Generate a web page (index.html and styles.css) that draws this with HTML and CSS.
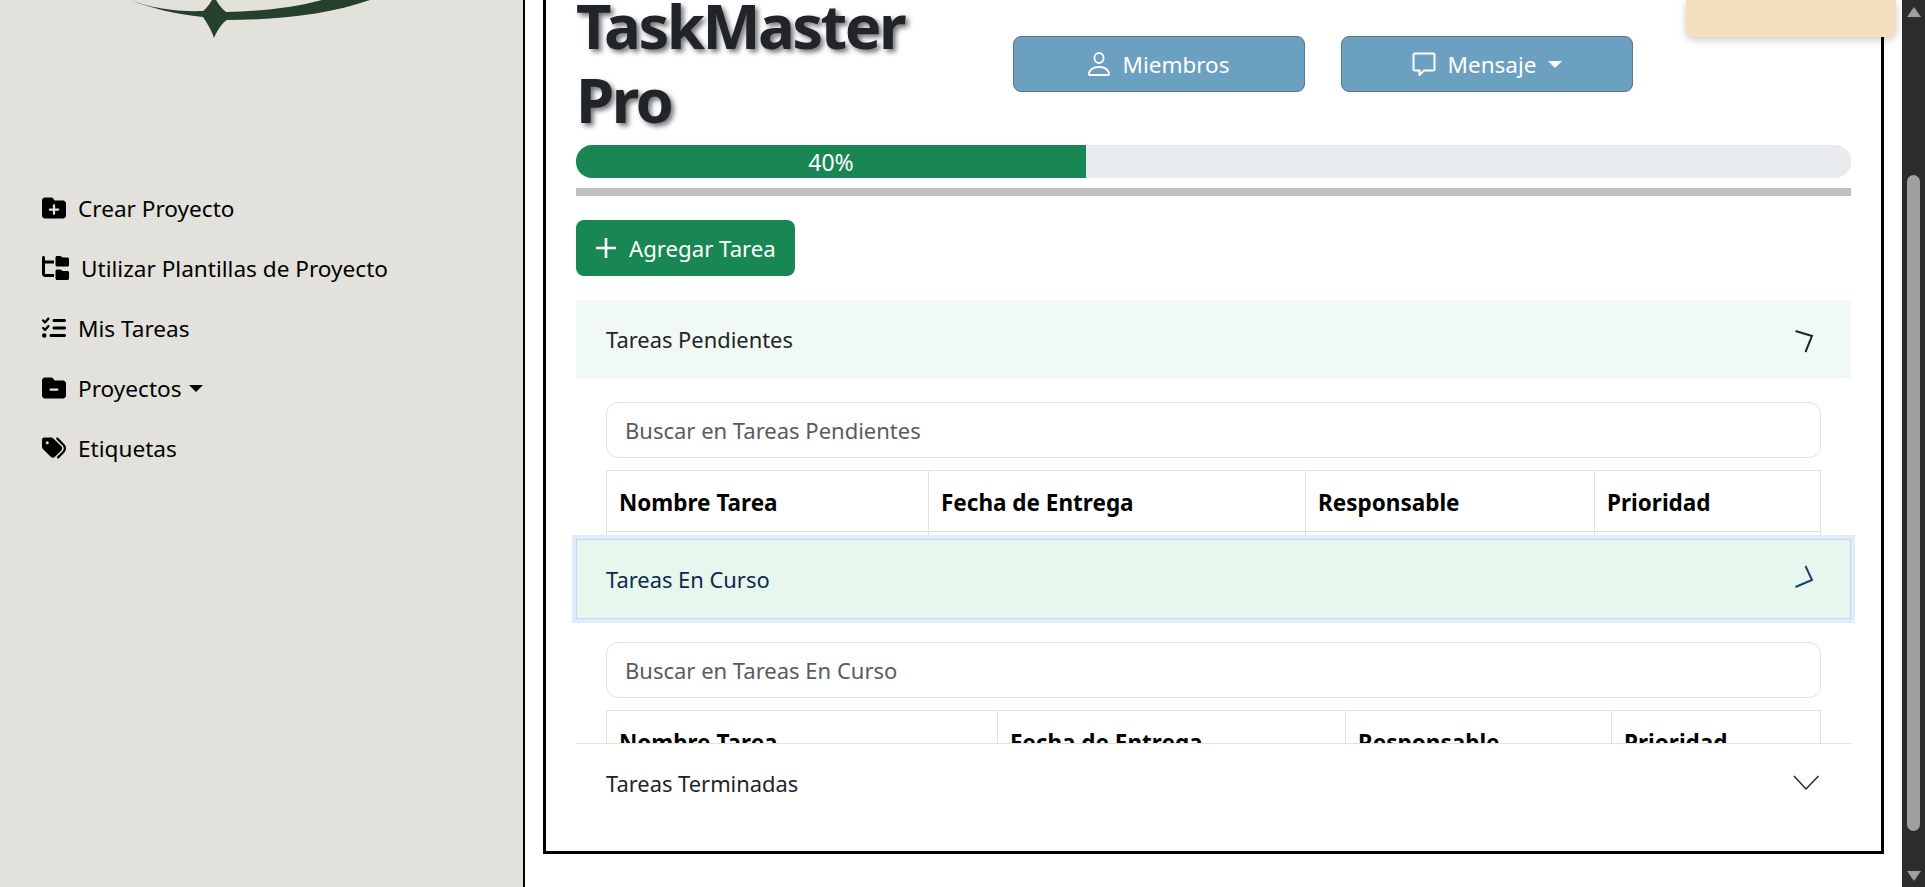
FILE: index.html
```html
<!doctype html>
<html lang="es">
    <head>
        <meta charset="UTF-8" />
        <meta name="viewport" content="width=device-width, initial-scale=1.0" />
        <title>TaskMaster Pro</title>
        <link rel="stylesheet" href="styles.css">
    </head>
    <body>
        <div class="page">
            <aside class="sidebar">
                <svg class="logo" viewBox="0 0 523 40" aria-hidden="true">
                    <path d="M130 0C150 8 178 12 203 11C207 8 210 4 214 -4C218 4 221 8 226 12C262 11 292 8 322 0H370C330 14 280 20 227 20C222 23 218 29 214 38C211 29 207 23 203 17C175 14 150 8 130 0Z" />
                </svg>
                <nav class="side-nav">
                    <a class="side-link" href="#">
                        <svg class="side-icon" viewBox="0 0 512 512"><path fill-rule="evenodd" d="M512 416c0 35.300-28.700 64-64 64H64c-35.300 0-64-28.700-64-64V96C0 60.700 28.700 32 64 32H192c20.100 0 39.100 9.500 51.200 25.600l19.200 25.600c6 8.100 15.500 12.800 25.600 12.800H448c35.300 0 64 28.700 64 64V416zM232 376c0 13.300 10.700 24 24 24s24-10.700 24-24V312h64c13.300 0 24-10.700 24-24s-10.700-24-24-24H280V200c0-13.300-10.700-24-24-24s-24 10.700-24 24v64H168c-13.300 0-24 10.700-24 24s10.700 24 24 24h64v64z"/></svg>
                        Crear Proyecto
                    </a>
                    <a class="side-link" href="#">
                        <svg class="side-icon side-icon-wide" viewBox="0 0 576 512"><path d="M64 32C64 14.300 49.700 0 32 0S0 14.300 0 32v96V384c0 35.300 28.700 64 64 64H256V384H64V160H256V96H64V32zM288 192c0 17.700 14.300 32 32 32H544c17.700 0 32-14.300 32-32V64c0-17.700-14.300-32-32-32H445.300c-8.500 0-16.600-3.400-22.600-9.400L409.400 9.400c-6-6-14.100-9.400-22.600-9.400H320c-17.700 0-32 14.300-32 32V192zm0 288c0 17.700 14.300 32 32 32H544c17.700 0 32-14.300 32-32V352c0-17.700-14.300-32-32-32H445.300c-8.500 0-16.600-3.400-22.600-9.400l-13.300-13.300c-6-6-14.100-9.400-22.600-9.400H320c-17.700 0-32 14.300-32 32V480z"/></svg>
                        Utilizar Plantillas de Proyecto
                    </a>
                    <a class="side-link" href="#">
                        <svg class="side-icon" viewBox="0 0 512 512"><path d="M152.100 38.200c9.900 8.900 10.700 24 1.800 33.900l-72 80c-4.400 4.900-10.600 7.800-17.200 7.900s-12.900-2.400-17.600-7L7 113C-2.300 103.600-2.300 88.400 7 79s24.600-9.400 33.900 0l22.100 22.100 55.100-61.200c8.900-9.900 24-10.700 33.900-1.800zm0 160c9.900 8.900 10.700 24 1.800 33.900l-72 80c-4.400 4.900-10.600 7.800-17.200 7.900s-12.900-2.400-17.600-7L7 273c-9.400-9.400-9.400-24.600 0-33.900s24.600-9.400 33.900 0l22.100 22.100 55.100-61.200c8.900-9.900 24-10.700 33.900-1.800zM224 96c0-17.700 14.300-32 32-32H480c17.700 0 32 14.300 32 32s-14.300 32-32 32H256c-17.700 0-32-14.300-32-32zm0 160c0-17.700 14.300-32 32-32H480c17.700 0 32 14.300 32 32s-14.300 32-32 32H256c-17.700 0-32-14.300-32-32zM160 416c0-17.700 14.300-32 32-32H480c17.700 0 32 14.300 32 32s-14.300 32-32 32H192c-17.700 0-32-14.300-32-32zM48 368a48 48 0 1 1 0 96 48 48 0 1 1 0-96z"/></svg>
                        Mis Tareas
                    </a>
                    <a class="side-link" href="#">
                        <svg class="side-icon" viewBox="0 0 512 512"><path fill-rule="evenodd" d="M448 480H64c-35.300 0-64-28.700-64-64V96C0 60.700 28.700 32 64 32H192c20.100 0 39.100 9.500 51.200 25.600l19.200 25.600c6 8.100 15.500 12.800 25.600 12.800H448c35.300 0 64 28.700 64 64V416c0 35.300-28.700 64-64 64zM184 264c-13.300 0-24 10.700-24 24s10.700 24 24 24H328c13.300 0 24-10.700 24-24s-10.700-24-24-24H184z"/></svg>
                        Proyectos<span class="caret caret-dark"></span>
                    </a>
                    <a class="side-link" href="#">
                        <svg class="side-icon" viewBox="0 0 512 512"><path fill-rule="evenodd" d="M345 39.100L472.800 168.400c52.400 53 52.400 138.200 0 191.200L360.800 472.900c-9.300 9.400-24.500 9.500-33.900 .2s-9.500-24.500-.2-33.900L438.600 325.900c33.900-34.300 33.900-89.400 0-123.700L310.900 72.900c-9.300-9.400-9.200-24.600 .2-33.900s24.600-9.200 33.900 .2zM0 229.500V80C0 53.500 21.500 32 48 32H197.500c17 0 33.300 6.700 45.300 18.700l168 168c25 25 25 65.500 0 90.500L277.300 442.700c-25 25-65.500 25-90.500 0l-168-168C6.700 262.700 0 246.500 0 229.500zM144 144a32 32 0 1 0 -64 0 32 32 0 1 0 64 0z"/></svg>
                        Etiquetas
                    </a>
                </nav>
            </aside>

            <main class="main">
                <section class="project-card">
                    <div class="project-head">
                        <h1 class="project-title">TaskMaster Pro</h1>
                        <button class="head-btn">
                            <svg class="person-icon" viewBox="2 2 12 12" preserveAspectRatio="none"><path d="M8 8a3 3 0 1 0 0-6 3 3 0 0 0 0 6m2-3a2 2 0 1 1-4 0 2 2 0 0 1 4 0m4 8c0 1-1 1-1 1H3s-1 0-1-1 1-4 6-4 6 3 6 4m-1-.004c-.001-.246-.154-.986-.832-1.664C11.516 10.680 10.289 10 8 10s-3.516.680-4.168 1.332c-.678.678-.830 1.418-.832 1.664z"/></svg>
                            Miembros
                        </button>
                        <button class="head-btn">
                            <svg class="btn-icon" viewBox="0 0 24 24"><path class="bubble" d="M3 1.500H21A1.500 1.500 0 0 1 22.500 3V17A1.500 1.500 0 0 1 21 18.500H12L7.500 23V18.500H3A1.500 1.500 0 0 1 1.500 17V3A1.500 1.500 0 0 1 3 1.500Z"/></svg>
                            Mensaje<span class="caret"></span>
                        </button>
                    </div>

                    <div class="progress">
                        <div class="progress-bar" style="width: 40%">40%</div>
                    </div>
                    <hr class="divider" />

                    <button class="add-btn">
                        <svg class="plus-icon" viewBox="0 0 20 20"><path d="M10 0V20M0 10H20"/></svg>
                        Agregar Tarea
                    </button>

                    <div class="accordion">
                        <div class="acc-item">
                            <div class="acc-header acc-header-open">
                                Tareas Pendientes
                                <svg class="chevron" viewBox="0 0 32 32"><polyline points="5.500,8 22,13 15.500,29"/></svg>
                            </div>
                            <div class="acc-body acc-body-first">
                                <input class="search-input" type="text" placeholder="Buscar en Tareas Pendientes" />
                                <table class="task-table">
                                    <colgroup>
                                        <col class="col-a1" /><col class="col-a2" /><col class="col-a3" /><col />
                                    </colgroup>
                                    <thead>
                                        <tr><th>Nombre Tarea</th><th>Fecha de Entrega</th><th>Responsable</th><th>Prioridad</th></tr>
                                    </thead>
                                    <tbody>
                                        <tr><td></td><td></td><td></td><td></td></tr>
                                    </tbody>
                                </table>
                            </div>
                        </div>
                        <div class="acc-item">
                            <div class="acc-header acc-header-focus">
                                Tareas En Curso
                                <svg class="chevron" viewBox="0 0 32 32"><polyline points="15.500,3 22,17 5.500,24"/></svg>
                            </div>
                            <div class="acc-body acc-body-second">
                                <input class="search-input" type="text" placeholder="Buscar en Tareas En Curso" />
                                <table class="task-table">
                                    <colgroup>
                                        <col class="col-b1" /><col class="col-b2" /><col class="col-b3" /><col />
                                    </colgroup>
                                    <thead>
                                        <tr><th>Nombre Tarea</th><th>Fecha de Entrega</th><th>Responsable</th><th>Prioridad</th></tr>
                                    </thead>
                                </table>
                            </div>
                        </div>
                        <div class="acc-item acc-item-last">
                            <div class="acc-header">
                                Tareas Terminadas
                                <svg class="chevron chevron-thin" viewBox="0 0 32 32"><polyline points="4,7 16,20 28.500,7"/></svg>
                            </div>
                        </div>
                    </div>
                </section>
            </main>

            <div class="toast"></div>

            <div class="scrollbar">
                <span class="scroll-up"></span>
                <span class="scroll-thumb"></span>
                <span class="scroll-down"></span>
            </div>
        </div>
    </body>
</html>
```

FILE: styles.css
```css
* {
    box-sizing: border-box;
}
body {
    margin: 0;
    padding: 0;
    background-color: #fff;
    color: #212529;
    font-family: "Noto Sans", "Open Sans", Arial, sans-serif;
    font-size: 22px;
}
.page {
    position: relative;
    display: flex;
    height: 887px;
    overflow: hidden;
}

/* sidebar */
.sidebar {
    flex: 0 0 525px;
    background-color: #e2e1dc;
    border-right: 2px solid #000;
}
.logo {
    display: block;
    width: 523px;
    height: 40px;
}
.logo path {
    fill: #25402c;
}
.side-nav {
    display: flex;
    flex-direction: column;
    margin-top: 138px;
    padding-left: 42px;
}
.side-link {
    display: flex;
    align-items: center;
    height: 60px;
    color: #000;
    font-size: 22.6px;
    text-decoration: none;
}
.side-icon {
    flex: none;
    width: 24px;
    height: 24px;
    margin-right: 12px;
}
.side-icon-wide {
    width: 27px;
}
.caret {
    display: inline-block;
    width: 0;
    height: 0;
    margin-left: 12px;
    border-top: 7px solid #fff;
    border-left: 7px solid transparent;
    border-right: 7px solid transparent;
}
.caret-dark {
    margin-left: 7px;
    border-top-color: #000;
}

/* project card */
.main {
    flex: 1;
    min-width: 0;
    padding: 0 18px;
}
.project-card {
    height: 864px;
    margin-top: -10px;
    padding: 0 30px;
    border: 3px solid #000;
    border-top: none;
}
.project-head {
    display: flex;
    align-items: center;
    height: 148px;
    margin-bottom: 7px;
}
.project-title {
    flex: 0 0 400px;
    margin: 0 37px 5px 0;
    font-size: 61.5px;
    font-weight: 700;
    line-height: 74px;
    letter-spacing: -2.5px;
    text-shadow: 3px 3px 5px rgba(0, 0, 0, 0.55);
}
.head-btn {
    display: flex;
    align-items: center;
    justify-content: center;
    width: 292px;
    height: 56px;
    margin-right: 36px;
    background-color: #6ca0c0;
    border: 1px solid #5f7686;
    border-radius: 8px;
    color: #fff;
    font-family: inherit;
    font-size: 22.5px;
}
.btn-icon {
    width: 24px;
    height: 24px;
    margin-right: 12px;
    fill: #fff;
}
.btn-icon .bubble {
    fill: none;
    stroke: #fff;
    stroke-width: 2;
}
.person-icon {
    width: 22px;
    height: 24px;
    margin-right: 12px;
    fill: #fff;
}

.progress {
    height: 33px;
    overflow: hidden;
    background-color: #e9ecef;
    border-radius: 16px;
}
.progress-bar {
    height: 100%;
    background-color: #198754;
    color: #fff;
    font-size: 23px;
    line-height: 35px;
    text-align: center;
}
.divider {
    height: 8px;
    margin: 10px 0 24px;
    background-color: #c0c0c0;
    border: none;
}
.add-btn {
    display: flex;
    align-items: center;
    width: 219px;
    height: 56px;
    padding: 0 20px;
    background-color: #198754;
    border: none;
    border-radius: 8px;
    color: #fff;
    font-family: inherit;
    font-size: 22.2px;
    white-space: nowrap;
}
.plus-icon {
    flex: none;
    width: 20px;
    height: 20px;
    margin-right: 13px;
    fill: none;
    stroke: #fff;
    stroke-width: 2.6;
}

/* accordion */
.accordion {
    margin-top: 24px;
}
.acc-header {
    position: relative;
    z-index: 1;
    display: flex;
    align-items: center;
    justify-content: space-between;
    height: 78px;
    padding: 0 29px 0 30px;
    font-size: 21.9px;
}
.acc-header-open {
    background-color: #f0f9f3;
}
.acc-header-focus {
    height: 80px;
    background-color: #e8f7ed;
    border: 1px solid #c4d8f0;
    box-shadow: 0 0 0 4px #e0ebfb;
    color: #0c2a50;
    padding-left: 29px;
    padding-top: 1px;
}
.chevron {
    width: 32px;
    height: 32px;
    fill: none;
    stroke: currentColor;
    stroke-width: 2;
}
.acc-header-focus .chevron {
    color: #1c3f73;
    margin-top: -1px;
    margin-right: -1px;
}
.chevron-thin {
    margin-top: 4px;
    stroke-width: 1.400;
}
.acc-body {
    overflow: hidden;
    padding: 24px 30px 0;
}
.acc-body-first {
    height: 161px;
}
.acc-body-second {
    height: 124px;
    padding-top: 23px;
}
.acc-item-last {
    position: relative;
    z-index: 1;
    background-color: #fff;
    border-top: 1px solid #dee2e6;
}
.search-input {
    display: block;
    width: 100%;
    height: 56px;
    padding: 0 18px;
    background-color: #fff;
    border: 1px solid #dee2e6;
    border-radius: 12px;
    font-family: inherit;
    font-size: 22px;
}
.search-input::placeholder {
    color: #595c5f;
}
.task-table {
    width: 100%;
    margin-top: 12px;
    border-collapse: collapse;
    table-layout: fixed;
    color: #000;
}
.task-table th,
.task-table td {
    height: 61px;
    padding: 2px 12px 0;
    border: 1px solid #dee2e6;
    font-size: 22.5px;
    font-weight: 700;
    text-align: left;
}
.col-a1 {
    width: 322px;
}
.col-a2 {
    width: 377px;
}
.col-a3 {
    width: 289px;
}
.col-b1 {
    width: 391px;
}
.col-b2 {
    width: 348px;
}
.col-b3 {
    width: 266px;
}

/* overlays */
.toast {
    position: absolute;
    top: 0;
    right: 29px;
    width: 210px;
    height: 37px;
    background-color: #f2e0c0;
    border-radius: 0 0 8px 8px;
    box-shadow: 0 3px 8px rgba(0, 0, 0, 0.2);
}

/* scrollbar */
.scrollbar {
    display: flex;
    flex: 0 0 23px;
    flex-direction: column;
    align-items: center;
    padding-top: 7px;
    background-color: #2c2c2c;
}
.scroll-up {
    width: 0;
    height: 0;
    border-bottom: 10px solid #9f9f9f;
    border-left: 7px solid transparent;
    border-right: 7px solid transparent;
}
.scroll-thumb {
    width: 13px;
    height: 656px;
    margin-top: 158px;
    background-color: #9f9f9f;
    border-radius: 7px;
}
.scroll-down {
    width: 0;
    height: 0;
    margin-top: 40px;
    border-top: 10px solid #9f9f9f;
    border-left: 7px solid transparent;
    border-right: 7px solid transparent;
}
```
